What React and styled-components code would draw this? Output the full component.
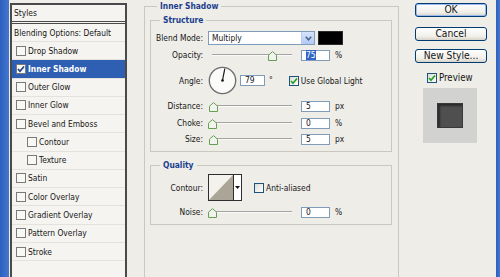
import React from 'react'
import styled, {createGlobalStyle} from 'styled-components'

const GlobalStyle = createGlobalStyle`
  html, body { margin: 0; padding: 0; }
  body {
    background: #eeede8;
    font-family: "DejaVu Sans Condensed", "DejaVu Sans", sans-serif;
  }
`

const styleItems = [
  {name: 'Drop Shadow'},
  {name: 'Inner Shadow', checked: true, selected: true},
  {name: 'Outer Glow'},
  {name: 'Inner Glow'},
  {name: 'Bevel and Emboss'},
  {name: 'Contour', indent: true},
  {name: 'Texture', indent: true},
  {name: 'Satin'},
  {name: 'Color Overlay'},
  {name: 'Gradient Overlay'},
  {name: 'Pattern Overlay'},
  {name: 'Stroke'},
]

const Dialog = styled.div`
  display: flex;
  width: 500px;
  height: 277px;
  overflow: hidden;
  background: #eeede8;
  color: #161616;
  font-size: 8.4px;
`

const FrameEdge = styled.div`
  flex: 0 0 ${p => p.$w}px;
  margin-left: ${p => (p.$right ? 'auto' : '0')};
  background: linear-gradient(90deg, #2d5fbf, #4477d0);
`

/* ---------- styles list ---------- */

const StylesList = styled.div`
  flex: 0 0 117px;
  box-sizing: border-box;
  height: 300px;
  margin: 3px 0 0 1px;
  border: 2px solid #4a4a4a;
  background: #f5f4f0;
`

const ListHeader = styled.div`
  height: 16px;
  line-height: 16px;
  padding-left: 2px;
  border-bottom: 3px double #4a4a4a;
`

const ListItem = styled.div`
  display: flex;
  align-items: center;
  gap: 2px;
  box-sizing: border-box;
  height: 18.27px;
  padding-left: ${p => (p.$indent ? 15 : 4)}px;
  border-bottom: 1px solid #e3e2dc;
  background: ${p => (p.$selected ? '#2f5fb3' : 'transparent')};
  color: ${p => (p.$selected ? '#fff' : 'inherit')};
  font-weight: ${p => (p.$selected ? 'bold' : 'normal')};
`

const PlainItem = styled(ListItem)`
  padding-left: 2px;
  height: 18px;
`

const Box = styled.span`
  display: inline-flex;
  align-items: center;
  justify-content: center;
  flex: 0 0 10px;
  width: 10px;
  height: 10px;
  box-sizing: border-box;
  border: 1px solid ${p => (p.$xp ? '#1c5180' : '#7a7a7a')};
  background: ${p => (p.$xp ? 'linear-gradient(135deg, #dcdcd6, #ffffff)' : '#f8f8f5')};
  svg { display: block; }
`

const Check = ({color}) => (
  <svg width="8" height="8" viewBox="0 0 8 8">
    <path d="M1 4 L3 6.2 L7 1.5" fill="none" stroke={color} strokeWidth="1.7" />
  </svg>
)

const CheckBox = ({checked, xp, color = '#21a121'}) => (
  <Box $xp={xp}>{checked ? <Check color={color} /> : null}</Box>
)

/* ---------- main group boxes ---------- */

const Main = styled.div`
  flex: 0 0 255px;
  margin-left: 17px;
`

const Group = styled.fieldset`
  box-sizing: border-box;
  width: ${p => p.$w}px;
  height: ${p => p.$h}px;
  margin: ${p => p.$mt || 0}px 0 0;
  padding: ${p => p.$pad};
  border: 1px solid #c9c8bf;
  min-width: 0;
`

const Legend = styled.legend`
  margin-left: ${p => p.$ml}px;
  padding: 0 3px;
  line-height: 12px;
  font-weight: bold;
  color: #1c3f8e;
`

const Row = styled.div`
  display: flex;
  align-items: center;
  height: ${p => p.$h}px;
  margin-top: ${p => p.$mt}px;
`

const Label = styled.span`
  flex: 0 0 52px;
  margin-right: 5px;
  text-align: right;
  white-space: nowrap;
`

const Select = styled.div`
  display: flex;
  box-sizing: border-box;
  width: 107px;
  height: 14px;
  border: 1px solid #7f9db9;
  background: #fff;
`

const SelectText = styled.span`
  flex: 1;
  padding-left: 3px;
  line-height: 12px;
`

const SelectArrow = styled.span`
  display: flex;
  align-items: center;
  justify-content: center;
  width: 12px;
  background: linear-gradient(#d6e3fe, #b3c9f6);
  border-left: 1px solid #b9cbf0;
`

const Swatch = styled.span`
  width: 25px;
  height: 14px;
  margin-left: 3px;
  box-sizing: border-box;
  border: 1px solid #2a2a2a;
  background: #000;
`

const SliderWrap = styled.div`
  position: relative;
  flex: 0 0 84px;
  height: 12px;
  margin-right: 9px;
`

const Track = styled.div`
  position: absolute;
  left: 4px;
  right: 0;
  top: 5px;
  height: 1px;
  background: #a3a3a0;
  border-bottom: 1px solid #fafafa;
`

const Thumb = styled.svg`
  position: absolute;
  top: 2px;
  left: ${p => p.$x - 4.5}px;
`

const Field = styled.span`
  box-sizing: border-box;
  width: ${p => p.$w || 29}px;
  height: ${p => p.$h || 11}px;
  margin-left: ${p => p.$ml || 0}px;
  padding-left: 4px;
  line-height: ${p => (p.$h || 11) - 2}px;
  border: 1px solid #7f9db9;
  background: #fff;
`

const Selected = styled.span`
  background: #3166c4;
  color: #fff;
`

const Unit = styled.span`
  margin-left: 5px;
`

const Degree = styled.span`
  align-self: flex-start;
  margin: 9px 0 0 4px;
`

const CheckLabel = styled.span`
  display: flex;
  align-items: center;
  gap: 2px;
  margin-left: ${p => p.$ml}px;
  white-space: nowrap;
`

const ContourPicker = styled.div`
  display: flex;
  box-sizing: border-box;
  width: 34px;
  height: 27px;
  border: 1px solid #2e2e2e;
  background: #fff;
  svg { display: block; }
`

const ContourDrop = styled.span`
  flex: 1;
  display: flex;
  align-items: center;
  justify-content: center;
  border-left: 1px solid #2e2e2e;
`

const Slider = ({value, max}) => {
  const x = 4 + (value / max) * 80
  return (
    <SliderWrap>
      <Track />
      <Thumb $x={x} width="9" height="10" viewBox="0 0 9 10">
        <path d="M0.5 4.2 L4.5 0.6 L8.5 4.2 L8.5 9.5 L0.5 9.5 Z" fill="#f2f2ee" stroke="#64a050" strokeWidth="1" />
      </Thumb>
    </SliderWrap>
  )
}

const Dial = ({angle}) => {
  const r = (angle * Math.PI) / 180
  const x = 14.5 + Math.cos(r) * 12
  const y = 14.5 - Math.sin(r) * 12
  return (
    <svg width="29" height="29" viewBox="0 0 29 29">
      <circle cx="14.5" cy="14.5" r="13.2" fill="#fbfbf9" stroke="#6b6b6b" strokeWidth="1.3" />
      <line x1="14.5" y1="14.5" x2={x} y2={y} stroke="#1a1a1a" strokeWidth="1.2" />
      <circle cx="14.5" cy="14.5" r="1.3" fill="#111" />
    </svg>
  )
}

/* ---------- right column ---------- */

const Side = styled.div`
  flex: 0 0 72px;
  margin-left: 16px;
  padding-top: 3px;
`

const Button = styled.div`
  box-sizing: border-box;
  height: 14px;
  margin-top: ${p => p.$mt || 0}px;
  line-height: 12px;
  text-align: center;
  font-size: 10.2px;
  border: 1px solid #003c74;
  border-radius: 3px;
  background: linear-gradient(#ffffff, #f0efea 70%, #d8d3c8);
  box-shadow: ${p => (p.$default ? 'inset 0 0 0 1px #9bbbef' : 'none')};
`

const PreviewToggle = styled.div`
  display: flex;
  align-items: center;
  gap: 2px;
  margin: 9px 0 0 12px;
  font-size: 9.6px;
`

const PreviewBox = styled.div`
  display: flex;
  align-items: center;
  justify-content: center;
  width: 54px;
  height: 55px;
  margin: 5px 0 0 8px;
  background: #d2d2d0;
`

const PreviewSquare = styled.div`
  box-sizing: border-box;
  width: 26px;
  height: 25px;
  background: #4f4f4f;
  border: 1px solid #383838;
  box-shadow: inset 2px 2px 2px #2c2c2c;
`

export default function App() {
  return (
    <>
      <GlobalStyle />
      <Dialog>
        <FrameEdge $w={9} />

        <StylesList>
          <ListHeader>Styles</ListHeader>
          <PlainItem>Blending Options: Default</PlainItem>
          {styleItems.map(item => (
            <ListItem key={item.name} $indent={item.indent} $selected={item.selected}>
              <CheckBox checked={item.checked} color="#1b3f8a" />
              {item.name}
            </ListItem>
          ))}
        </StylesList>

        <Main>
          <Group $w={255} $h={300} $pad="2px 0 0 5px">
            <Legend $ml={7}>Inner Shadow</Legend>

            <Group $w={242} $h={138} $pad="0">
              <Legend $ml={9}>Structure</Legend>
              <Row $h={14} $mt={5}>
                <Label>Blend Mode:</Label>
                <Select>
                  <SelectText>Multiply</SelectText>
                  <SelectArrow>
                    <svg width="7" height="5" viewBox="0 0 7 5">
                      <path d="M0.8 0.8 L3.5 3.8 L6.2 0.8" fill="none" stroke="#4d6185" strokeWidth="1.5" />
                    </svg>
                  </SelectArrow>
                </Select>
                <Swatch />
              </Row>
              <Row $h={12} $mt={4}>
                <Label>Opacity:</Label>
                <Slider value={75} max={100} />
                <Field><Selected>75</Selected></Field>
                <Unit>%</Unit>
              </Row>
              <Row $h={29} $mt={5}>
                <Label>Angle:</Label>
                <Dial angle={79} />
                <Field $w={25} $ml={3}>79</Field>
                <Degree>°</Degree>
                <CheckLabel $ml={16}>
                  <CheckBox checked xp />
                  Use Global Light
                </CheckLabel>
              </Row>
              <Row $h={12} $mt={5}>
                <Label>Distance:</Label>
                <Slider value={5} max={250} />
                <Field>5</Field>
                <Unit>px</Unit>
              </Row>
              <Row $h={12} $mt={5}>
                <Label>Choke:</Label>
                <Slider value={0} max={100} />
                <Field>0</Field>
                <Unit>%</Unit>
              </Row>
              <Row $h={12} $mt={4}>
                <Label>Size:</Label>
                <Slider value={5} max={250} />
                <Field>5</Field>
                <Unit>px</Unit>
              </Row>
            </Group>

            <Group $w={242} $h={66} $mt={7} $pad="0">
              <Legend $ml={9}>Quality</Legend>
              <Row $h={27} $mt={3}>
                <Label>Contour:</Label>
                <ContourPicker>
                  <svg width="24" height="25" viewBox="0 0 24 25">
                    <rect width="24" height="25" fill="#f4f2ec" />
                    <path d="M0 25 L24 0 L24 25 Z" fill="#aba597" />
                  </svg>
                  <ContourDrop>
                    <svg width="5" height="3" viewBox="0 0 5 3">
                      <path d="M0 0 L5 0 L2.5 3 Z" fill="#111" />
                    </svg>
                  </ContourDrop>
                </ContourPicker>
                <CheckLabel $ml={12}>
                  <CheckBox xp />
                  Anti-aliased
                </CheckLabel>
              </Row>
              <Row $h={12} $mt={5}>
                <Label>Noise:</Label>
                <Slider value={0} max={100} />
                <Field>0</Field>
                <Unit>%</Unit>
              </Row>
            </Group>
          </Group>
        </Main>

        <Side>
          <Button $default>OK</Button>
          <Button $mt={10}>Cancel</Button>
          <Button $mt={8}>New Style...</Button>
          <PreviewToggle>
            <CheckBox checked xp />
            Preview
          </PreviewToggle>
          <PreviewBox>
            <PreviewSquare />
          </PreviewBox>
        </Side>

        <FrameEdge $w={4} $right />
      </Dialog>
    </>
  )
}
